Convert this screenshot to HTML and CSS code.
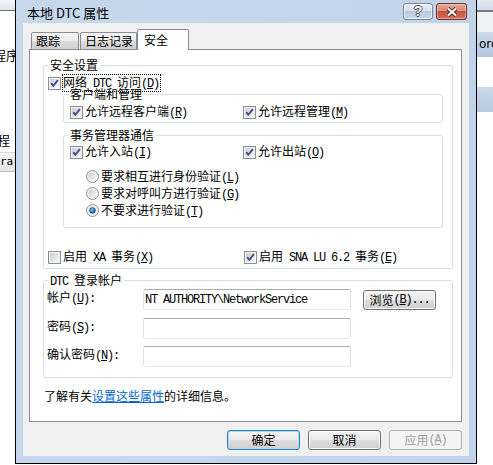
FILE: index.html
```html
<!DOCTYPE html>
<html lang="zh-CN">
<head>
<meta charset="utf-8">
<title>本地 DTC 属性</title>
<link rel="stylesheet" href="styles.css">
</head>
<body>
<svg class="defs" width="0" height="0" aria-hidden="true">
  <defs>
    <linearGradient id="cbg" x1="0" y1="0" x2="1" y2="1">
      <stop offset="0" stop-color="#cbcfd5"/>
      <stop offset="1" stop-color="#f7f7f7"/>
    </linearGradient>
    <linearGradient id="rdg" x1="0" y1="0" x2="1" y2="1">
      <stop offset="0" stop-color="#c9ccd1"/>
      <stop offset="1" stop-color="#fbfbfb"/>
    </linearGradient>
    <radialGradient id="dot" cx="0.4" cy="0.35" r="0.7">
      <stop offset="0" stop-color="#8fd3ff"/>
      <stop offset="0.55" stop-color="#2c88d2"/>
      <stop offset="1" stop-color="#0f4c86"/>
    </radialGradient>
    <symbol id="ckon" viewBox="0 0 13 13">
      <rect x=".5" y=".5" width="12" height="12" fill="#f4f4f4" stroke="#8e8f8f"/>
      <rect x="2" y="2" width="9" height="9" fill="url(#cbg)"/>
      <path d="M3.2 6.2 L5.3 8.8 L9.9 3.2" fill="none" stroke="#3f4f8c" stroke-width="1.9"/>
    </symbol>
    <symbol id="ckoff" viewBox="0 0 13 13">
      <rect x=".5" y=".5" width="12" height="12" fill="#f4f4f4" stroke="#8e8f8f"/>
      <rect x="2" y="2" width="9" height="9" fill="url(#cbg)"/>
    </symbol>
    <symbol id="rdoff" viewBox="0 0 13 13">
      <circle cx="6.5" cy="6.5" r="6" fill="#f4f4f4" stroke="#8e8f8f"/>
      <circle cx="6.5" cy="6.5" r="4.2" fill="url(#rdg)"/>
    </symbol>
    <symbol id="rdon" viewBox="0 0 13 13">
      <circle cx="6.5" cy="6.5" r="6" fill="#f4f4f4" stroke="#8e8f8f"/>
      <circle cx="6.5" cy="6.5" r="4.2" fill="url(#rdg)"/>
      <circle cx="6.5" cy="6.5" r="2.8" fill="url(#dot)" stroke="#1d4f7f" stroke-width=".8"/>
    </symbol>
  </defs>
</svg>

<div class="bg-left">
  <div class="bl-top"></div>
  <div class="bl-t1">程序</div>
  <div class="bl-t2">程</div>
  <div class="bl-bar">rar</div>
</div>

<div class="bg-right">
  <div class="br-top"></div>
  <div class="br-gap"></div>
  <div class="br-band1">ord</div>
  <div class="br-band2"></div>
</div>

<div class="dialog">
  <div class="titlebar">
    <span class="title">本地 DTC 属性</span>
    <div class="caps">
      <div class="cap help">?</div>
      <div class="cap close">
        <svg width="12" height="10" viewBox="0 0 12 10"><path d="M2 1.5 L10 8.5 M10 1.5 L2 8.5" stroke="#4a2a22" stroke-width="3.8"/><path d="M2 1.5 L10 8.5 M10 1.5 L2 8.5" stroke="#fff" stroke-width="2"/></svg>
      </div>
    </div>
  </div>

  <div class="client">
    <div class="tabs">
      <div class="tab t1">跟踪</div>
      <div class="tab t2">日志记录</div>
      <div class="tab sel">安全</div>
    </div>

    <div class="panel">
      <div class="group g1">
        <div class="legend">安全设置</div>
        <div class="ck">
          <svg class="box"><use href="#ckon"/></svg>
          <span class="lbl focus">网络<span class="m"> DTC </span>访问<span class="m">(<u>D</u>)</span></span>
        </div>

        <div class="group sub g2">
          <div class="legend">客户端和管理</div>
          <div class="cols">
            <div class="ck"><svg class="box"><use href="#ckon"/></svg><span class="lbl">允许远程客户端<span class="m">(<u>R</u>)</span></span></div>
            <div class="ck"><svg class="box"><use href="#ckon"/></svg><span class="lbl">允许远程管理<span class="m">(<u>M</u>)</span></span></div>
          </div>
        </div>

        <div class="group sub g3">
          <div class="legend">事务管理器通信</div>
          <div class="cols">
            <div class="ck"><svg class="box"><use href="#ckon"/></svg><span class="lbl">允许入站<span class="m">(<u>I</u>)</span></span></div>
            <div class="ck"><svg class="box"><use href="#ckon"/></svg><span class="lbl">允许出站<span class="m">(<u>O</u>)</span></span></div>
          </div>
          <div class="radios">
            <div class="rd"><svg class="box"><use href="#rdoff"/></svg><span class="lbl">要求相互进行身份验证<span class="m">(<u>L</u>)</span></span></div>
            <div class="rd"><svg class="box"><use href="#rdoff"/></svg><span class="lbl">要求对呼叫方进行验证<span class="m">(<u>G</u>)</span></span></div>
            <div class="rd"><svg class="box"><use href="#rdon"/></svg><span class="lbl">不要求进行验证<span class="m">(<u>T</u>)</span></span></div>
          </div>
        </div>

        <div class="cols wide">
          <div class="ck"><svg class="box"><use href="#ckoff"/></svg><span class="lbl">启用<span class="m"> XA </span>事务<span class="m">(<u>X</u>)</span></span></div>
          <div class="ck"><svg class="box"><use href="#ckon"/></svg><span class="lbl">启用<span class="m"> SNA LU 6.2 </span>事务<span class="m">(<u>E</u>)</span></span></div>
        </div>
      </div>

      <div class="group g4">
        <div class="legend"><span class="m">DTC </span>登录帐户</div>
        <div class="frow r1">
          <span class="flabel">帐户<span class="m">(<u>U</u>):</span></span>
          <div class="input"><span class="m">NT AUTHORITY\NetworkService</span></div>
          <div class="btn browse">浏览<span class="m">(<u>B</u>)...</span></div>
        </div>
        <div class="frow r2">
          <span class="flabel">密码<span class="m">(<u>S</u>):</span></span>
          <div class="input"></div>
        </div>
        <div class="frow r3">
          <span class="flabel">确认密码<span class="m">(<u>N</u>):</span></span>
          <div class="input"></div>
        </div>
      </div>

      <p class="info">了解有关<a class="link">设置这些属性</a>的详细信息。</p>
    </div>

    <div class="btns">
      <div class="btn default">确定</div>
      <div class="btn">取消</div>
      <div class="btn disabled">应用<span class="m">(<u>A</u>)</span></div>
    </div>
  </div>
</div>
</body>
</html>
```

FILE: styles.css
```css
* { box-sizing: border-box; margin: 0; padding: 0; }
html, body { width: 493px; height: 465px; overflow: hidden; }
body {
  position: relative;
  background: #fff;
  font-family: "Noto Sans CJK SC", "Noto Sans", sans-serif;
  font-size: 12px;
  line-height: 14px;
  color: #000;
}
.defs { display: block; width: 0; height: 0; overflow: hidden; }
.m {
  font-family: "Liberation Mono", monospace;
  font-size: 12px;
  letter-spacing: -1.2px;
  white-space: pre;
}
u { text-decoration: underline; }

/* ---------- desktop behind the dialog ---------- */
.bg-left {
  position: absolute; left: 0; top: 0;
  width: 15px; height: 465px; overflow: hidden; background: #fff;
}
.bl-top { height: 11px; background: linear-gradient(#f3f5f8, #dfe4ea); border-bottom: 1px solid #6f6f6f; }
.bl-t1 { margin: 37px 0 0 -7px; font-size: 13px; white-space: nowrap; }
.bl-t2 { margin: 71px 0 0 -3px; font-size: 13px; white-space: nowrap; }
.bl-bar {
  margin-top: 5px; height: 20px;
  background: linear-gradient(#f4f4f4, #e4e4e4);
  border-top: 1px solid #d6d6d6; border-bottom: 1px solid #bdbdbd;
  font-family: "DejaVu Sans Mono", monospace; font-size: 11px; line-height: 18px;
  white-space: nowrap;
}
.bg-right {
  position: absolute; left: 477px; top: 0;
  width: 16px; height: 465px; overflow: hidden; background: #fff;
}
.br-top { height: 12px; background: linear-gradient(#e2eaf3, #cfdbe8); border-bottom: 2px solid #7a7a7a; }
.br-gap { height: 20px; background: #eef0f3; }
.br-band1 {
  height: 25px; background: linear-gradient(#cadaeb, #b4c9e0);
  padding-left: 2px; line-height: 25px; font-size: 12px; font-family: "DejaVu Sans", sans-serif;
  white-space: nowrap;
}
.br-band2 { margin-top: 30px; height: 25px; background: linear-gradient(#cbdaeb, #b6cae1); }

/* ---------- dialog window ---------- */
.dialog {
  position: absolute; left: 15px; top: 0;
  width: 462px; height: 464px;
  border: 1px solid #000; border-top: 0;
  background: linear-gradient(90deg, #c6d8ec, #c0d3e9);
  display: flex; flex-direction: column;
}
.titlebar {
  height: 23px; flex: none;
  display: flex; align-items: flex-start;
  padding: 0 9px 0 11px;
}
.title { flex: 1; padding-top: 6px; font-size: 13px; line-height: 14px; color: #000; white-space: nowrap; }
.caps { display: flex; gap: 3px; margin-top: 3px; }
.cap {
  height: 17px; border-radius: 3px;
  display: flex; align-items: center; justify-content: center;
}
.help {
  width: 30px;
  border: 1px solid #7b8799;
  background: linear-gradient(#e6edf5, #d6e1ee 45%, #bccbdd 50%, #c9d7e7);
  box-shadow: inset 0 0 0 1px rgba(255,255,255,.6);
  font-family: "Liberation Sans", sans-serif; font-weight: bold; font-size: 14px; line-height: 15px;
  color: #fff;
  text-shadow: 1px 0 #4b4b4b, -1px 0 #4b4b4b, 0 1px #4b4b4b, 0 -1px #4b4b4b;
}
.close {
  width: 31px;
  border: 1px solid #6e3328;
  background: linear-gradient(#e9a998, #d98a77 45%, #c7533c 50%, #d3705a);
  box-shadow: inset 0 0 0 1px rgba(255,220,210,.45);
}

.client {
  flex: 1;
  margin: 0 7px 7px 7px;
  background: #f0f0f0;
  padding: 6px 7px 0 6px;
  display: flex; flex-direction: column;
}

/* ---------- tabs ---------- */
.tabs {
  display: flex; align-items: flex-end;
  height: 20px; padding-left: 2px;
  position: relative; z-index: 1;
}
.tab {
  height: 17px;
  border: 1px solid #898c95; border-bottom: 0;
  border-radius: 2px 2px 0 0;
  background: linear-gradient(#f3f3f3, #ebebeb 48%, #dcdcdc 52%, #cfcfcf);
  padding-left: 4px; line-height: 15px;
  white-space: nowrap;
}
.t1 { width: 48px; }
.t2 { width: 57px; margin-left: 1px; }
.tab.sel {
  width: 52px; height: 21px; margin-bottom: -1px;
  background: #fff; padding-left: 6px; line-height: 19px;
}

/* ---------- panel ---------- */
.panel {
  height: 373px; flex: none;
  border: 1px solid #898c95; background: #fff;
  padding: 0 8px 0 13px;
}
.group {
  border: 1px solid #d5dfe5; border-radius: 3px;
  padding: 0 4px 0 4px;
}
.legend {
  display: table;
  margin-top: -7px;
  padding: 0 2px;
  line-height: 12px; height: 12px;
  background: linear-gradient(#fff, #fff) center / 100% 4px no-repeat;
  white-space: nowrap;
}
.g1 { margin-top: 15px; padding-bottom: 4px; }
.g1 > .ck { margin-top: 5px; }
.sub { margin: 0 5px 0 15px; padding-left: 6px; }
.sub .legend { margin-left: -2px; }
.g2 { margin-top: 4px; padding-bottom: 3px; }
.g2 .cols { margin-top: 5px; }
.g3 { margin-top: 12px; padding-bottom: 8px; }
.g3 .cols { margin-top: 4px; }

.cols { display: grid; grid-template-columns: 173px auto; }
.cols.wide { grid-template-columns: 196px auto; margin-top: 22px; }

.ck { display: flex; align-items: center; height: 14px; gap: 2px; white-space: nowrap; }
.box { width: 13px; height: 13px; flex: none; }
.lbl { line-height: 12px; }
.focus { outline: 1px dotted #000; padding: 1px 1px 1px 0; }

.radios { margin-top: 9px; padding-left: 16px; }
.rd { display: flex; align-items: center; height: 17px; gap: 2px; white-space: nowrap; }

.g4 { margin-top: 11px; padding-bottom: 10px; }
.frow { display: flex; align-items: center; height: 21px; }
.frow.r1 { margin-top: 1px; }
.frow.r2 { margin-top: 8px; }
.frow.r3 { margin-top: 7px; }
.flabel { width: 96px; align-self: flex-start; margin-top: 1px; margin-left: -1px; white-space: nowrap; }
.input {
  width: 208px; height: 21px;
  border: 1px solid; border-color: #abadb3 #dbdfe6 #e3e9ef #e2e3ea;
  border-radius: 2px; background: #fff;
  padding-left: 1px;
  display: flex; align-items: center;
}
.browse { margin-left: 12px; }

.info { margin: 11px 0 0 1px; line-height: 14px; white-space: nowrap; }
.link { color: #0066cc; text-decoration: underline; }

/* ---------- buttons ---------- */
.btns { display: flex; justify-content: flex-end; gap: 8px; margin-top: 8px; }
.btn {
  width: 73px; height: 20px; flex: none;
  display: flex; align-items: center; justify-content: center;
  border: 1px solid #707070; border-radius: 3px;
  background: linear-gradient(#f2f2f2, #ebebeb 48%, #dddddd 52%, #cfcfcf);
  box-shadow: inset 0 0 0 1px #fbfbfb;
  white-space: nowrap;
}
.btn.default { border-color: #3c7fb1; box-shadow: inset 0 0 0 1px #9fdcf7; }
.btn.disabled {
  border-color: #adb2b5;
  background: #f4f4f4; box-shadow: none;
  color: #a0a0a0;
}
```
